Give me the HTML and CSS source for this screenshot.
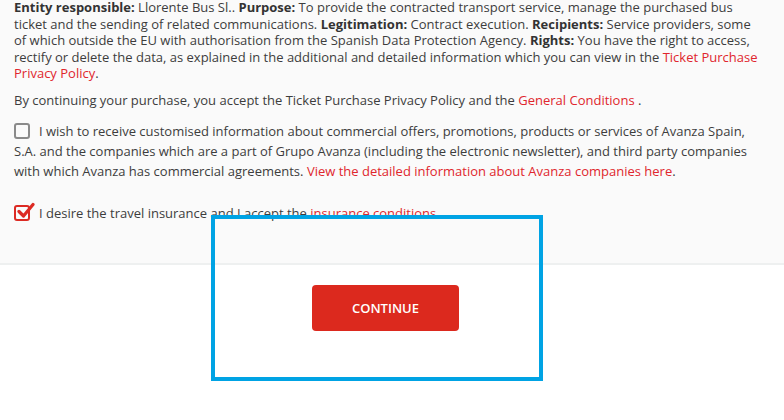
FILE: index.html
```html
<!DOCTYPE html>
<html>
<head>
<meta charset="utf-8">
<link rel="stylesheet" href="styles.css">
</head>
<body>
<section class="legal">
  <p class="info"><b>Entity responsible:</b> Llorente Bus Sl.. <b>Purpose:</b> To provide the contracted transport service, manage the purchased bus ticket and the sending of related communications. <b>Legitimation:</b> Contract execution. <b>Recipients:</b> Service providers, some of which outside the EU with authorisation from the Spanish Data Protection Agency. <b>Rights:</b> You have the right to access, rectify or delete the data, as explained in the additional and detailed information which you can view in the <a class="link">Ticket Purchase Privacy Policy</a>.</p>
  <p class="accept">By continuing your purchase, you accept the Ticket Purchase Privacy Policy and the <a class="link">General Conditions</a> .</p>
  <p class="opt"><span class="box"></span>I wish to receive customised information about commercial offers, promotions, products or services of Avanza Spain, S.A. and the companies which are a part of Grupo Avanza (including the electronic newsletter), and third party companies with which Avanza has commercial agreements. <a class="link">View the detailed information about Avanza companies here</a>.</p>
  <p class="opt ins"><span class="box checked"><svg viewBox="0 0 20 20" width="20" height="20"><path d="M4 9.5 L8.5 14 L18 2.5" fill="none" stroke="#dc2a23" stroke-width="3.2" stroke-linecap="round" stroke-linejoin="round"/></svg></span>I desire the travel insurance and I accept the <a class="link">insurance conditions</a></p>
</section>
<section class="actions">
  <button class="continue">CONTINUE</button>
</section>
<div class="highlight"></div>
</body>
</html>
```
FILE: styles.css
```css
html, body {
  margin: 0;
  padding: 0;
}
body {
  width: 784px;
  height: 420px;
  overflow: hidden;
  background: #ffffff;
  font-family: "Open Sans", "Liberation Sans", sans-serif;
  font-size: 13px;
  color: #3d3d3d;
  position: relative;
}
.legal {
  background: #fafafa;
  padding: 0 22px 0 14px;
  height: 264px;
  border-bottom: 2px solid #eef0f0;
  box-sizing: content-box;
}
.legal p {
  margin: 0;
}
.info {
  line-height: 16.5px;
  margin-top: -1px !important;
}
.info b, .opt b {
  font-weight: 700;
  color: #333;
}
.accept {
  line-height: 16.5px;
  margin-top: 10px !important;
}
.opt {
  line-height: 20px;
  margin-top: 13px !important;
}
.ins {
  margin-top: 22px !important;
}
.link {
  color: #e0262d;
}
.box {
  display: inline-block;
  width: 16px;
  height: 16px;
  box-sizing: border-box;
  border: 2px solid #8a8a8a;
  border-radius: 3px;
  vertical-align: -3px;
  margin-right: 9px;
  position: relative;
}
.box.checked {
  border-color: #dc2a23;
}
.box svg {
  position: absolute;
  left: -1px;
  top: -5px;
}
.actions {
  display: flex;
  justify-content: center;
  padding-top: 20px;
  padding-right: 13px;
}
.continue {
  width: 147px;
  height: 46px;
  background: #dc291e;
  color: #fff;
  border: none;
  border-radius: 4px;
  font-family: "Open Sans", "Liberation Sans", sans-serif;
  font-size: 13px;
  font-weight: 600;
}
.highlight {
  position: absolute;
  left: 211px;
  top: 215px;
  width: 332px;
  height: 166px;
  box-sizing: border-box;
  border: 4px solid #00a3e4;
}
```
